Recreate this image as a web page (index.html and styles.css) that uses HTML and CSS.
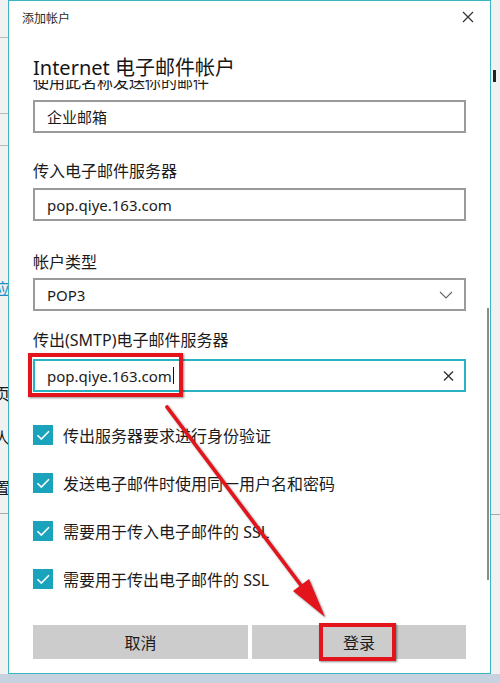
FILE: index.html
```html
<!DOCTYPE html>
<html lang="zh-CN">
<head>
<meta charset="utf-8">
<title>添加帐户</title>
<link rel="stylesheet" href="styles.css">
</head>
<body>
<div class="screen">
  <div class="backdrop backdrop-left">
    <div class="rule rule-a"></div>
    <div class="rule rule-b"></div>
    <div class="rule rule-c"></div>
    <div class="peek peek-link"><span>应</span></div>
    <div class="peek peek-1"><span>页</span></div>
    <div class="peek peek-2"><span>人</span></div>
    <div class="peek peek-3"><span>置</span></div>
    <div class="rule rule-d"></div>
  </div>

  <div class="dialog">
    <div class="titlebar">
      <span class="title">添加帐户</span>
      <svg class="close" width="12" height="12" viewBox="0 0 12 12"><path d="M1 1L11 11M11 1L1 11" stroke="#333" stroke-width="1.2" fill="none"/></svg>
    </div>
    <h1 class="heading">Internet 电子邮件帐户</h1>

    <div class="scroll">
      <div class="field field-cut">
        <div class="label">使用此名称发送你的邮件</div>
        <div class="input">企业邮箱</div>
      </div>
      <div class="field">
        <div class="label">传入电子邮件服务器</div>
        <div class="input">pop.qiye.163.com</div>
      </div>
      <div class="field field-type">
        <div class="label">帐户类型</div>
        <div class="input select">
          <span>POP3</span>
          <svg width="14" height="8" viewBox="0 0 14 8"><path d="M1 1L7 7L13 1" stroke="#666" stroke-width="1.1" fill="none"/></svg>
        </div>
      </div>
      <div class="field field-smtp">
        <div class="label">传出(SMTP)电子邮件服务器</div>
        <div class="input focused">
          <span class="value">pop.qiye.163.com<span class="caret"></span></span>
          <svg width="11" height="10" viewBox="0 0 11 10"><path d="M1 0.5L10 9.5M10 0.5L1 9.5" stroke="#333" stroke-width="1.4" fill="none"/></svg>
          <span class="mark mark-input"></span>
        </div>
      </div>

      <div class="checks">
        <div class="check"><span class="box"><svg width="20" height="20" viewBox="0 0 20 20"><path d="M4.5 10.2L8.3 14L16 6.3" stroke="#fff" stroke-width="1.6" fill="none"/></svg></span>传出服务器要求进行身份验证</div>
        <div class="check"><span class="box"><svg width="20" height="20" viewBox="0 0 20 20"><path d="M4.5 10.2L8.3 14L16 6.3" stroke="#fff" stroke-width="1.6" fill="none"/></svg></span>发送电子邮件时使用同一用户名和密码</div>
        <div class="check"><span class="box"><svg width="20" height="20" viewBox="0 0 20 20"><path d="M4.5 10.2L8.3 14L16 6.3" stroke="#fff" stroke-width="1.6" fill="none"/></svg></span>需要用于传入电子邮件的 SSL</div>
        <div class="check"><span class="box"><svg width="20" height="20" viewBox="0 0 20 20"><path d="M4.5 10.2L8.3 14L16 6.3" stroke="#fff" stroke-width="1.6" fill="none"/></svg></span>需要用于传出电子邮件的 SSL</div>
      </div>
    </div>

    <div class="scrollbar"></div>

    <div class="actions">
      <button class="btn">取消</button>
      <button class="btn">登录<span class="mark mark-btn"></span></button>
    </div>
  </div>

  <div class="backdrop backdrop-right">
    <div class="tick"></div>
    <div class="rule rule-d2"></div>
  </div>
</div>
<div class="taskbar"></div>

<svg class="arrow" width="500" height="683" viewBox="0 0 500 683">
  <line x1="167" y1="407" x2="303" y2="588" stroke="#e3141b" stroke-width="3.6" stroke-linecap="round"/>
  <polygon points="325,617 309,579 293,591" fill="#e3141b"/>
</svg>
</body>
</html>
```

FILE: styles.css
```css
* { box-sizing: border-box; }

html, body {
  margin: 0;
  padding: 0;
}

body {
  width: 500px;
  height: 683px;
  overflow: hidden;
  position: relative;
  background: #c7d2e1;
  font-family: "Noto Sans", "Noto Sans CJK SC", sans-serif;
  color: #1b1b1b;
}

.screen {
  display: flex;
  height: 674px;
}

/* windows behind the dialog */
.backdrop {
  background: #f1f1f1;
  overflow: hidden;
  position: relative;
}

.backdrop-left { width: 8px; }
.backdrop-right { width: 9px; }

.rule { height: 1px; background: #b9b9b9; }
.rule-a { margin-top: 37px; }
.rule-b { margin-top: 75px; }
.rule-c { margin-top: 31px; }
.rule-d { margin-top: 17px; background: #a8a8a8; }
.rule-d2 { margin-top: 432px; background: #a8a8a8; }

.peek {
  display: flex;
  justify-content: flex-end;
  width: 8px;
  height: 18px;
  font-size: 16px;
  line-height: 18px;
  font-family: "Noto Sans CJK SC", sans-serif;
}
.peek span { flex: none; margin-right: -2px; }
.peek-link { margin-top: 133px; color: #1b8fc6; }
.peek-1 { margin-top: 87px; }
.peek-2 { margin-top: 26px; }
.peek-3 { margin-top: 32px; }

.tick {
  width: 3px;
  height: 12px;
  margin: 70px 0 0 2px;
  background: #222;
}

/* dialog */
.dialog {
  width: 483px;
  height: 674px;
  border: 1px solid #3db5c3;
  background: #fff;
  display: flex;
  flex-direction: column;
  position: relative;
}

.titlebar {
  height: 32px;
  display: flex;
  align-items: center;
  justify-content: space-between;
  padding: 0 16px 0 13px;
}

.title {
  font-family: "Noto Sans CJK SC", sans-serif;
  font-size: 12px;
  color: #2a2a2a;
}

.heading {
  margin: 0;
  padding: 23px 24px 0;
  font-size: 20px;
  line-height: 24px;
  font-weight: 400;
  color: #161616;
  height: 47px;
}

.scroll {
  flex: 1;
  overflow: hidden;
  padding: 0 24px;
}

.field { margin-top: 28px; }
.field-cut { margin-top: -8px; }
.field-type { margin-top: 31px; }
.field-smtp { margin-top: 19px; }

.label {
  font-size: 16px;
  line-height: 20px;
  margin-bottom: 7px;
  white-space: nowrap;
}
.field-cut .label { margin-bottom: 8px; }
.field-type .label { margin-bottom: 6px; }
.field-smtp .label { margin-bottom: 9px; }

.input {
  height: 33px;
  border: 2px solid #9a9a9a;
  padding: 0 10px 0 12px;
  font-size: 15px;
  display: flex;
  align-items: center;
  justify-content: space-between;
  position: relative;
}

.field-cut .input,
.field:nth-child(2) .input { justify-content: flex-start; }

.focused { border-color: #2ab2c2; }

.value { display: inline-flex; align-items: center; }

.caret {
  width: 1px;
  height: 17px;
  background: #111;
  margin-left: 1px;
}

.select svg { margin-right: 1px; }

/* red highlight frames */
.mark {
  position: absolute;
  border: 4px solid #e3141b;
  box-shadow: 1px 1px 2px rgba(0, 0, 0, 0.45);
  pointer-events: none;
}

.mark-input {
  left: -7px;
  top: -8px;
  width: 155px;
  height: 44px;
}

.mark-btn {
  left: 67px;
  top: -2px;
  width: 77px;
  height: 38px;
}

.checks { margin-top: 19px; }

.check {
  height: 48px;
  display: flex;
  align-items: center;
  gap: 10px;
  font-size: 16px;
}

.box {
  width: 20px;
  height: 20px;
  background: #1aa4bc;
  display: flex;
}

.scrollbar {
  position: absolute;
  left: 478px;
  top: 307px;
  width: 2px;
  height: 272px;
  background: #8c8c8c;
}

.actions {
  display: grid;
  grid-template-columns: 215px 214px;
  gap: 4px;
  padding: 0 24px 14px;
}

.btn {
  position: relative;
  height: 34px;
  border: 0;
  background: #cccccc;
  font-family: "Noto Sans CJK SC", sans-serif;
  font-size: 16px;
  color: #1b1b1b;
  padding: 0;
}

.taskbar {
  height: 9px;
  background: #c7d2e1;
}

.arrow {
  position: absolute;
  left: 0;
  top: 0;
  pointer-events: none;
  filter: drop-shadow(1px 1px 1px rgba(0, 0, 0, 0.45));
}
```
